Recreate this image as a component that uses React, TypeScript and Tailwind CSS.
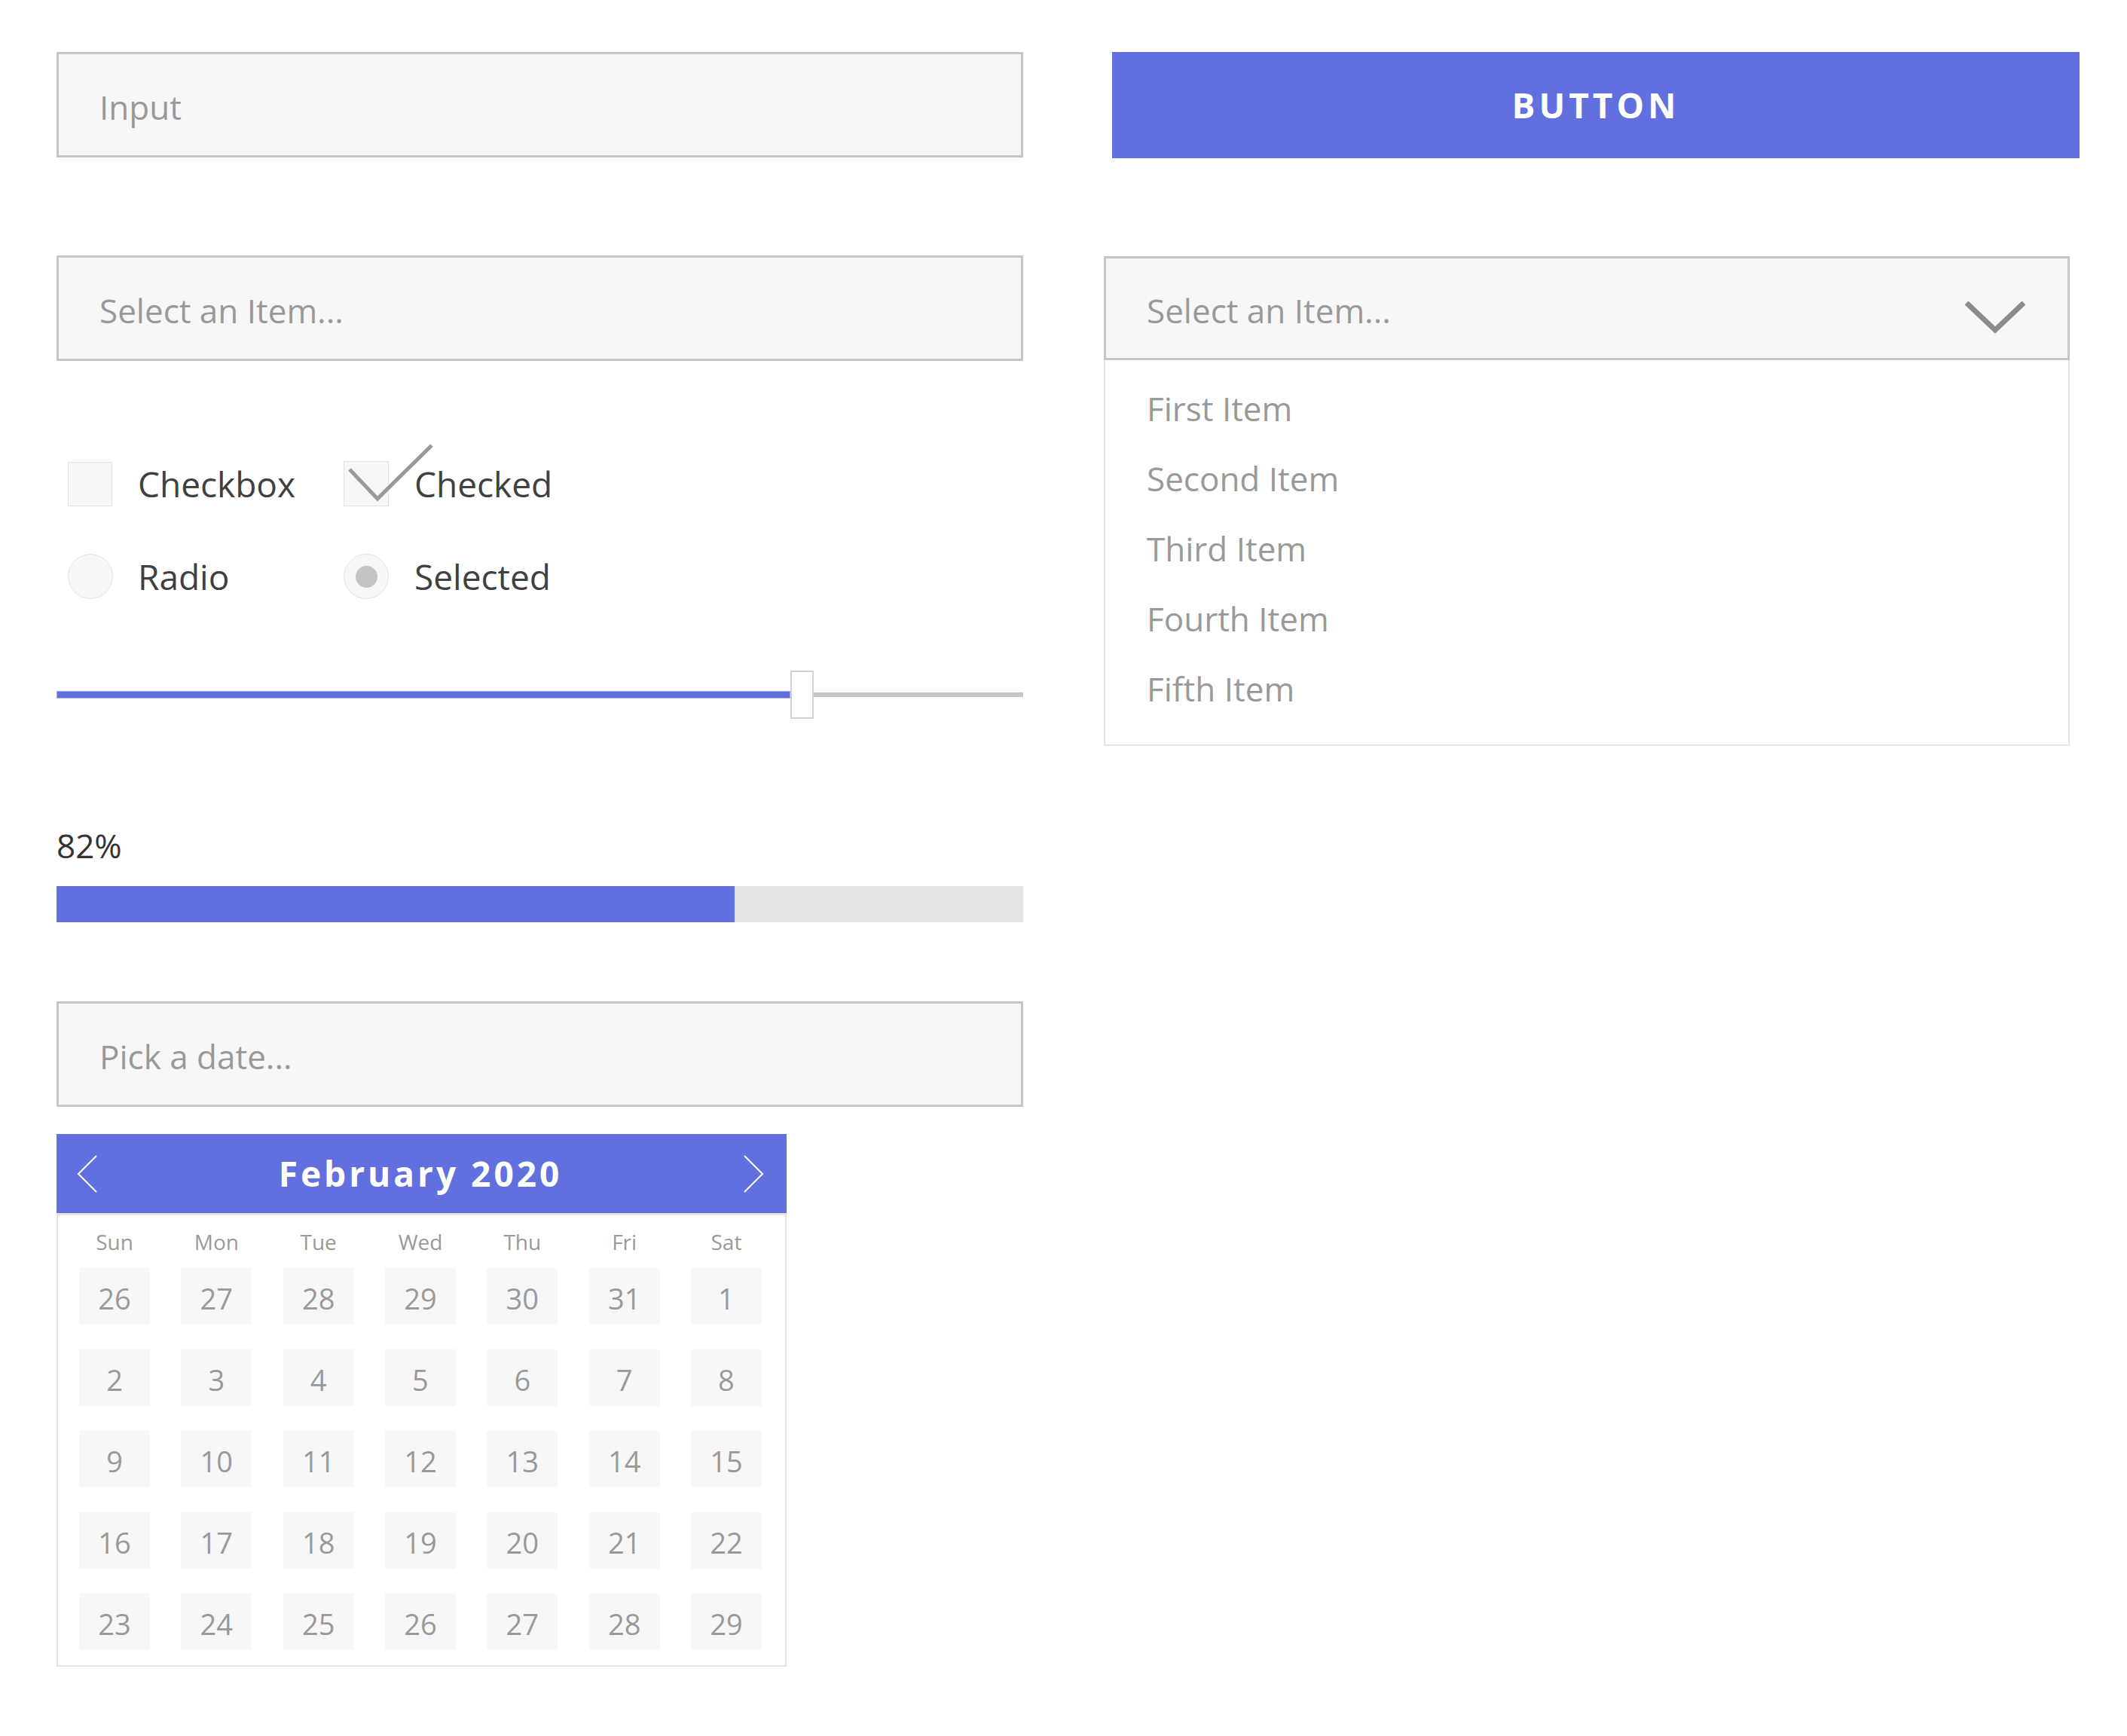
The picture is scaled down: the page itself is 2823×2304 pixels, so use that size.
const days = [
  26, 27, 28, 29, 30, 31, 1,
  2, 3, 4, 5, 6, 7, 8,
  9, 10, 11, 12, 13, 14, 15,
  16, 17, 18, 19, 20, 21, 22,
  23, 24, 25, 26, 27, 28, 29,
];

const weekdays = ["Sun", "Mon", "Tue", "Wed", "Thu", "Fri", "Sat"];

const items = ["First Item", "Second Item", "Third Item", "Fourth Item", "Fifth Item"];

function TextBox({ label }: { label: string }) {
  return (
    <div className="h-[140px] border-[3px] border-[#c6c6c6] bg-[#f7f7f7] pl-[54px] pt-[6px] flex items-center text-[44px] text-[#999999]">
      {label}
    </div>
  );
}

function Calendar() {
  return (
    <div className="w-[969px] mt-[36px]">
      <div className="h-[105px] bg-[#6170de] flex items-center justify-between pl-[27px] pr-[30px]">
        <svg width="28" height="52" viewBox="0 0 28 52" fill="none">
          <polyline points="26,2 2,26 26,50" stroke="white" strokeWidth="2" />
        </svg>
        <span className="text-[46px] font-bold text-white tracking-[4px]">February 2020</span>
        <svg width="28" height="52" viewBox="0 0 28 52" fill="none">
          <polyline points="2,2 26,26 2,50" stroke="white" strokeWidth="2" />
        </svg>
      </div>
      <div className="border-x-2 border-b-2 border-t-[3px] border-[#e4e4e4] pl-[28px] pb-[20px]">
        <div className="w-[906px] h-[70px] grid grid-cols-[repeat(7,94px)] justify-between items-center text-[28px] text-[#999999]">
          {weekdays.map((d) => (
            <div key={d} className="text-center">
              {d}
            </div>
          ))}
        </div>
        <div className="w-[906px] grid grid-cols-[repeat(7,94px)] justify-between gap-y-[33px]">
          {days.map((d, i) => (
            <div
              key={i}
              className="h-[75px] bg-[#f7f7f7] pt-[6px] flex items-center justify-center text-[38px] text-[#999999]"
            >
              {d}
            </div>
          ))}
        </div>
      </div>
    </div>
  );
}

export default function App() {
  return (
    <div className="w-[2823px] min-h-[2304px] bg-white pl-[75px] pt-[69px] flex gap-[107px] font-['Open_Sans',sans-serif]">
      {/* left column */}
      <div className="w-[1283px] flex flex-col">
        <TextBox label="Input" />
        <div className="mt-[130px]">
          <TextBox label="Select an Item..." />
        </div>

        <div className="mt-[133px] pl-[15px] h-[60px] flex items-center text-[46px] text-[#404040]">
          <div className="w-[366px] flex items-center">
            <div className="w-[59px] h-[59px] bg-[#f7f7f7] border border-[#e2e2e2]" />
            <span className="ml-[34px]">Checkbox</span>
          </div>
          <div className="flex items-center">
            <div className="relative w-[60px] h-[60px] bg-[#f7f7f7] border border-[#e2e2e2]">
              <svg className="absolute left-[4px] top-[-26px]" width="115" height="80" viewBox="0 0 115 80" fill="none">
                <polyline points="3,36 40,75 112,4" stroke="#999999" strokeWidth="5" />
              </svg>
            </div>
            <span className="ml-[34px]">Checked</span>
          </div>
        </div>

        <div className="mt-[63px] pl-[15px] h-[60px] flex items-center text-[46px] text-[#404040]">
          <div className="w-[366px] flex items-center">
            <div className="w-[60px] h-[60px] rounded-full bg-[#f7f7f7] border border-[#e2e2e2]" />
            <span className="ml-[33px]">Radio</span>
          </div>
          <div className="flex items-center">
            <div className="w-[60px] h-[60px] rounded-full bg-[#f7f7f7] border border-[#e2e2e2] flex items-center justify-center">
              <div className="w-[29px] h-[29px] rounded-full bg-[#c4c4c4]" />
            </div>
            <span className="ml-[34px]">Selected</span>
          </div>
        </div>

        {/* slider */}
        <div className="mt-[95px] h-[64px] flex items-center">
          <div className="w-[974px] h-[10px] bg-[#6170de] border border-[#a3aaf0]" />
          <div className="w-[31px] h-[64px] bg-white border-2 border-[#d2d2d2]" />
          <div className="flex-1 h-[6px] bg-[#c6c6c6]" />
        </div>

        <div className="mt-[146px] text-[44px] leading-none text-[#333333]">82%</div>
        <div className="mt-[32px] h-[48px] flex bg-[#e4e4e6]">
          <div className="w-[900px] bg-[#6170de]" />
        </div>

        <div className="mt-[105px]">
          <TextBox label="Pick a date..." />
        </div>

        <Calendar />
      </div>

      {/* right column */}
      <div className="w-[1295px] flex flex-col">
        <button className="ml-[11px] w-[1284px] h-[141px] bg-[#6170de] text-white text-[46px] font-bold tracking-[5px] flex items-center justify-center">
          BUTTON
        </button>

        <div className="mt-[130px] w-[1282px]">
          <div className="h-[138px] border-[3px] border-[#c6c6c6] bg-[#f7f7f7] pl-[54px] pr-[54px] flex items-center justify-between text-[44px] text-[#999999]">
            <span className="pt-[6px]">Select an Item...</span>
            <svg className="mt-[24px]" width="84" height="46" viewBox="0 0 84 46" fill="none">
              <polyline points="4,4 42,40 80,4" stroke="#8c8c8c" strokeWidth="7" />
            </svg>
          </div>
          <div className="border-x-2 border-b-2 border-[#e4e4e4] pl-[55px] pt-[17px] pb-[28px] text-[44px] text-[#999999]">
            {items.map((it) => (
              <div key={it} className="h-[93px] flex items-center">
                {it}
              </div>
            ))}
          </div>
        </div>
      </div>
    </div>
  );
}
